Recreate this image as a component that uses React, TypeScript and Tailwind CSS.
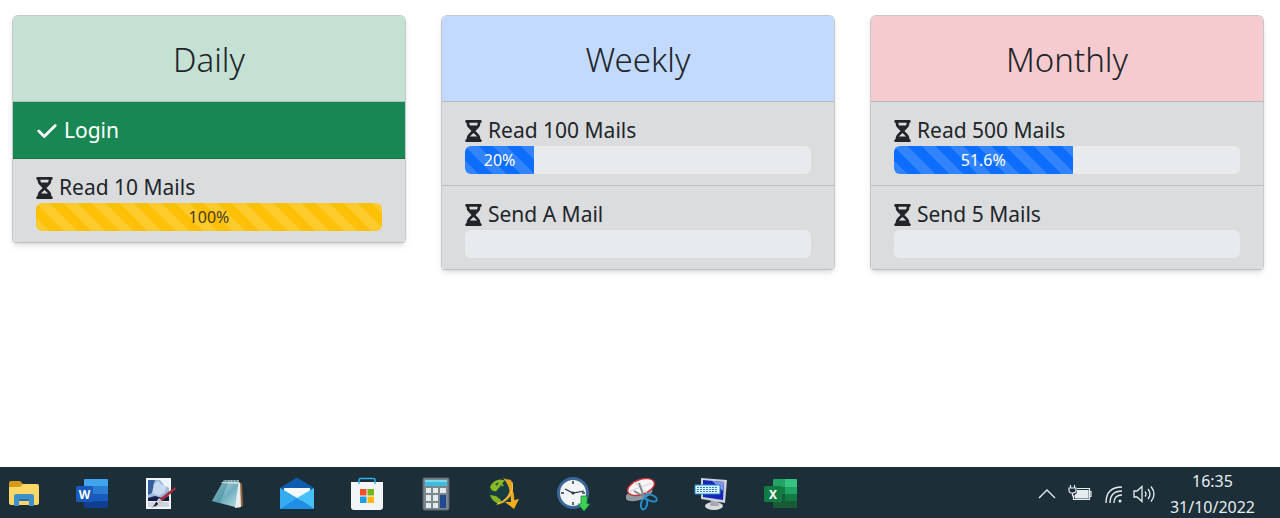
import type { ReactNode } from "react";
import clsx from "clsx";
import { FaCheck, FaHourglassHalf } from "react-icons/fa6";

interface Quest {
  title: string;
  progress: number;
  done?: boolean;
}

interface QuestGroup {
  name: string;
  headerClass: string;
  quests: Quest[];
}

const GROUPS: QuestGroup[] = [
  {
    name: "Daily",
    headerClass: "bg-[#c5e1d4]",
    quests: [
      { title: "Login", progress: 100, done: true },
      { title: "Read 10 Mails", progress: 100 },
    ],
  },
  {
    name: "Weekly",
    headerClass: "bg-[#c2daff]",
    quests: [
      { title: "Read 100 Mails", progress: 20 },
      { title: "Send A Mail", progress: 0 },
    ],
  },
  {
    name: "Monthly",
    headerClass: "bg-[#f5cbcf]",
    quests: [
      { title: "Read 500 Mails", progress: 51.6 },
      { title: "Send 5 Mails", progress: 0 },
    ],
  },
];

const STRIPES =
  "bg-[linear-gradient(45deg,rgba(255,255,255,.15)_25%,transparent_25%,transparent_50%,rgba(255,255,255,.15)_50%,rgba(255,255,255,.15)_75%,transparent_75%,transparent)] bg-[length:28px_28px]";

function ProgressBar({ label, value }: { label: string; value: number }) {
  return (
    <div
      role="progressbar"
      aria-label={label}
      aria-valuenow={value}
      aria-valuemin={0}
      aria-valuemax={100}
      className="h-7 overflow-hidden rounded-md bg-[#e7ebee]"
    >
      {value > 0 && (
        <div
          className={clsx(
            "flex h-full items-center justify-center text-base",
            STRIPES,
            value >= 100 ? "bg-[#ffc107] text-[#4a3c12]" : "bg-[#0d6efd] text-white"
          )}
          style={{ width: `${value}%` }}
        >
          {value}%
        </div>
      )}
    </div>
  );
}

function QuestRow({ quest }: { quest: Quest }) {
  return (
    <li
      className={clsx(
        "border-b px-[23px] pt-3.5",
        quest.done
          ? "border-[#177548] bg-[#198754] pb-3 text-white"
          : "border-[#bcbec0] bg-[#dadcde] pb-[11px] text-[#212529]"
      )}
    >
      <div className="flex h-[30px] items-center gap-1.5 text-[21px]">
        {quest.done ? <FaCheck className="h-[22px] w-[22px]" /> : <FaHourglassHalf className="h-[22px] w-[17px]" />}
        <span>{quest.title}</span>
      </div>
      {!quest.done && <ProgressBar label={quest.title} value={quest.progress} />}
    </li>
  );
}

function QuestCard({ group }: { group: QuestGroup }) {
  return (
    <section className="overflow-hidden rounded-t-md rounded-b-sm border border-b-0 border-[#c6c9cb] shadow-md">
      <h2
        className={clsx(
          "flex h-[86px] items-center justify-center border-b border-[#b4b9bd] pt-0.5 text-[33px] font-light text-[#212529]",
          group.headerClass
        )}
      >
        {group.name}
      </h2>
      <ul>
        {group.quests.map((q) => (
          <QuestRow key={q.title} quest={q} />
        ))}
      </ul>
    </section>
  );
}

function ExplorerIcon() {
  return (
    <svg viewBox="0 0 32 32" className="size-8">
      <path d="M1 5q0-2 2-2h9l3 3h12q2 0 2 2v4H1z" fill="#d69a18" />
      <path d="M1 9h11l3-3h14q2 0 2 2v17q0 2-2 2H3q-2 0-2-2z" fill="#fbd768" />
      <path d="M6 28V18q0-2 2-2h16q2 0 2 2v10h-5v-5H11v5z" fill="#3f8fcb" />
      <path d="M11 21h10v2H11z" fill="#2873ae" />
    </svg>
  );
}

function WordIcon() {
  return (
    <svg viewBox="0 0 32 32" className="size-8">
      <path d="M8 2q0-1 1-1h22q1 0 1 1v6H8z" fill="#41a5ee" />
      <path d="M8 8h24v8H8z" fill="#2b7cd3" />
      <path d="M8 16h24v7H8z" fill="#185abd" />
      <path d="M8 23h24v6q0 1-1 1H9q-1 0-1-1z" fill="#103f91" />
      <rect x="0" y="8" width="17" height="16" rx="1.5" fill="#185abd" />
      <text x="8.500" y="20.500" textAnchor="middle" fontSize="12" fontWeight="700" fill="#fff">
        W
      </text>
    </svg>
  );
}

function PaintIcon() {
  return (
    <svg viewBox="0 0 32 32" className="size-8">
      <path d="M2 0h25v31H2z" fill="#f3f5f9" />
      <path d="M4 2h21v21H4z" fill="#9db8dd" />
      <path d="M4 2h7l-2 6 3-1-2 7-6 3z" fill="#345f9f" />
      <path d="M10 6l4-3 4 4 5-1-2 8-6 4-7-3z" fill="#c7d9ee" />
      <path d="M16 2h9v8l-5-3z" fill="#e9f1fa" />
      <path d="M4 20l7-2 7 2 7-2v5H4z" fill="#141d49" />
      <path d="M4 24h21v5H4z" fill="#cfd4df" />
      <path d="M31 9l1 2-15 13-3-2z" fill="#a1303a" />
      <path d="M15 20l4 4-4 3-3-3z" fill="#c9cbd0" />
      <path d="M12 23l3 3q-3 4-8 3 3-1 5-6z" fill="#222633" stroke="#dce0e6" />
    </svg>
  );
}

function NotepadIcon() {
  return (
    <svg viewBox="0 0 32 32" className="size-8">
      <defs>
        <linearGradient id="pad" x1="0" y1="0" x2="1" y2="1">
          <stop offset="0" stopColor="#d8f0f3" />
          <stop offset="0.550" stopColor="#6fafbd" />
          <stop offset="1" stopColor="#bfdce2" />
        </linearGradient>
      </defs>
      <path d="M26 3l4 3 1 22-5 2z" fill="#94683e" />
      <path d="M24 3l4 2 1 24-6 1z" fill="#e9eef0" />
      <path d="M12 2h15l-4 27-23-6z" fill="url(#pad)" />
      <path d="M12 2L0 23l8 2L17 3z" fill="#3c8394" opacity="0.500" />
      <path d="M10 4h17l-1 2-17-1z" fill="#cdd6d9" />
      <path d="M12 2v2M15 2v2M18 2v2M21 2v2M24 2v2" stroke="#626d72" />
    </svg>
  );
}

function MailIcon() {
  return (
    <svg viewBox="0 0 34 32" className="h-8 w-[34px]">
      <path d="M0 10L16 0q1-.6 2 0l16 10v4L17 24 0 14z" fill="#0f5cae" />
      <path d="M4 10h26v8L17 26 4 16z" fill="#f4f8fb" />
      <path d="M34 10L17 20l17 11z" fill="#45c1f8" />
      <path d="M0 10l34 21H0z" fill="#2b9df0" />
      <path d="M0 31l17-11 17 11z" fill="#1f8ee6" />
      <path d="M0 10l17 10L0 31z" fill="#35abf0" />
    </svg>
  );
}

function StoreIcon() {
  return (
    <svg viewBox="0 0 34 34" className="size-[34px]">
      <path d="M1 5h32v25q0 3-3 3H4q-3 0-3-3z" fill="#f3f4f5" />
      <path d="M9 7V3q0-1.500 1.500-1.500h13Q25 1.500 25 3v4" fill="none" stroke="#2eb2ea" strokeWidth="1.500" />
      <path d="M10 12h6.500v6.500H10z" fill="#ee5028" />
      <path d="M17.500 12H24v6.500h-6.500z" fill="#74b51b" />
      <path d="M10 19.500h6.500V26H10z" fill="#1a9fe6" />
      <path d="M17.500 19.500H24V26h-6.500z" fill="#fbb70e" />
    </svg>
  );
}

function CalculatorIcon() {
  return (
    <svg viewBox="0 0 32 34" className="h-[34px] w-8">
      <rect x="3" y="1" width="26" height="32" rx="1.500" fill="#7b868e" stroke="#59636b" />
      <path d="M5 3h22v6H5z" fill="#43b9dc" />
      <path d="M5 3h22v2H5z" fill="#7bd7ed" />
      <path
        d="M6 11h5v5H6zM13 11h5v5h-5zM20 11h6v5h-6zM6 18h5v6H6zM13 18h5v6h-5zM6 26h5v5H6zM13 26h5v5h-5z"
        fill="#e5eaed"
      />
      <path d="M20 18h6v13h-6z" fill="#204b91" />
    </svg>
  );
}

function GlobeIcon() {
  return (
    <svg viewBox="0 0 32 34" className="h-[34px] w-8">
      <circle cx="13" cy="15" r="12.500" fill="#173d40" />
      <path d="M2 10Q5 3 12 2.500l5 1-3 3 2 2-5 2-3 4-4-1z" fill="#8cba24" />
      <path d="M2 18l6 1 5 4-1 4Q4 25 2 18z" fill="#86b524" />
      <path d="M7 7l4-2-2 4zM11 9l3-1-1 2z" fill="#245042" />
      <path d="M15 1q6 1 8 8 4 9 3 14l5-1-5 10-9-7 6 0Q23 9 15 1z" fill="#f2ac1c" />
      <path d="M23 3q5 10-2 18-5 6-14 7Q16 25 20 18q4-8-1-16z" fill="#e3a21b" />
      <path d="M24 5q2 9-4 15-5 5-11 7" fill="none" stroke="#f7cf58" />
    </svg>
  );
}

function ClockIcon() {
  return (
    <svg viewBox="0 0 34 34" className="size-[34px]">
      <circle cx="17" cy="16" r="14.500" fill="#f2f5f6" stroke="#39679a" strokeWidth="3" />
      <path d="M17 4v3M17 25v3M5 16h3M26 16h3" stroke="#273744" strokeWidth="1.500" />
      <path d="M9 12l8 4 11-2" fill="none" stroke="#273744" strokeWidth="1.200" />
      <circle cx="17" cy="16" r="1.500" fill="#273744" />
      <path d="M25 19h6v8h3l-6 7-6-7h3z" fill="#3ed254" stroke="#1b8d37" strokeWidth="0.800" />
    </svg>
  );
}

function SnippingIcon() {
  return (
    <svg viewBox="0 0 32 34" className="h-[34px] w-8">
      <ellipse cx="13" cy="17" rx="14" ry="6" transform="rotate(-18 13 17)" fill="#9299a0" />
      <ellipse cx="15" cy="10" rx="14" ry="7.500" transform="rotate(-20 15 10)" fill="#f6f4f4" stroke="#ca303b" strokeWidth="1.500" />
      <path d="M4 14l22-8M8 5l13 11" stroke="#d2d4d7" />
      <path d="M13 6l5 14M8 14l9 5" stroke="#818991" strokeWidth="2" />
      <ellipse cx="18" cy="27" rx="3" ry="5.500" transform="rotate(10 18 27)" fill="none" stroke="#238dcc" strokeWidth="2" />
      <ellipse cx="25" cy="21" rx="6" ry="3" transform="rotate(20 25 21)" fill="none" stroke="#238dcc" strokeWidth="2" />
    </svg>
  );
}

function KeyboardIcon() {
  return (
    <svg viewBox="0 0 34 34" className="size-[34px]">
      <ellipse cx="20" cy="29" rx="9" ry="4" fill="#d8dade" />
      <path d="M17 23h7l1 6h-9z" fill="#a7aab1" />
      <path d="M7 1l26 2-2 23L7 22z" fill="#cbd2dd" />
      <path d="M9 3l21 2-1 18-20-3z" fill="#1726b4" />
      <path d="M18 4l12 1-1 9z" fill="#8395e4" />
      <path d="M1 8h25v9H1z" fill="#e0f2fb" stroke="#258fca" />
      <path d="M3 10.500h21M3 12.500h21M3 14.500h21" stroke="#2786bd" strokeDasharray="2 1" />
    </svg>
  );
}

function ExcelIcon() {
  return (
    <svg viewBox="0 0 34 32" className="h-8 w-[34px]">
      <path d="M9 2q0-1 1-1h11v8H9z" fill="#21a366" />
      <path d="M21 1h11q1 0 1 1v7H21z" fill="#33c481" />
      <path d="M9 9h12v7H9z" fill="#107c41" />
      <path d="M21 9h12v7H21z" fill="#21a366" />
      <path d="M9 16h12v7H9z" fill="#185c37" />
      <path d="M21 16h12v7H21z" fill="#107c41" />
      <path d="M9 23h24v6q0 1-1 1H10q-1 0-1-1z" fill="#185c37" />
      <rect x="0" y="8" width="18" height="16" rx="1.500" fill="#107c41" />
      <text x="9" y="20.500" textAnchor="middle" fontSize="12" fontWeight="700" fill="#fff">
        X
      </text>
    </svg>
  );
}

const APPS: { name: string; icon: ReactNode }[] = [
  { name: "File Explorer", icon: <ExplorerIcon /> },
  { name: "Word", icon: <WordIcon /> },
  { name: "Paint", icon: <PaintIcon /> },
  { name: "Notepad", icon: <NotepadIcon /> },
  { name: "Mail", icon: <MailIcon /> },
  { name: "Store", icon: <StoreIcon /> },
  { name: "Calculator", icon: <CalculatorIcon /> },
  { name: "Download manager", icon: <GlobeIcon /> },
  { name: "Scheduler", icon: <ClockIcon /> },
  { name: "Snipping Tool", icon: <SnippingIcon /> },
  { name: "On-Screen Keyboard", icon: <KeyboardIcon /> },
  { name: "Excel", icon: <ExcelIcon /> },
];

function Tray() {
  return (
    <div className="flex items-center text-[#e6edf0]">
      <button type="button" aria-label="Show hidden icons">
        <svg viewBox="0 0 18 24" className="h-6 w-[18px]" fill="none" stroke="currentColor" strokeWidth="1.300">
          <path d="M1 16l8-8 8 8" />
        </svg>
      </button>
      <button type="button" aria-label="Battery" className="ml-3">
        <svg viewBox="0 0 24 24" className="size-6" fill="none" stroke="currentColor" strokeWidth="1.200">
          <path d="M9 6.500h12.500v11H5.500V14M21.500 9.500h1.500v5h-1.500" />
          <path d="M9.500 8.500h10.500v7.500H7.500v-3q2-1 2-3z" fill="currentColor" />
          <path d="M2.500 3v3M6.500 3v3M1 6h7v2.500q0 2.500-3.500 2.500T1 8.500zM4.500 11v3h3" />
        </svg>
      </button>
      <button type="button" aria-label="Network" className="ml-3">
        <svg viewBox="0 0 20 24" className="h-6 w-5" fill="none" stroke="currentColor" strokeWidth="1.300">
          <path d="M2 21Q2 5 18 5M6 21Q6 9 18 9M10 21q0-8 8-8" />
          <circle cx="16" cy="19" r="1.500" fill="currentColor" stroke="none" />
        </svg>
      </button>
      <button type="button" aria-label="Volume" className="ml-2">
        <svg viewBox="0 0 24 24" className="size-6" fill="none" stroke="currentColor" strokeWidth="1.300">
          <path d="M2 9h3l5-4.500v15L5 15H2z" />
          <path d="M13 9.500q2 2.500 0 5M16 7q4 5 0 10M19 4.500q6 7.500 0 15" />
        </svg>
      </button>
      <div className="ml-3.5 mr-[25px] text-center text-base leading-[26px]">
        <div>16:35</div>
        <div>31/10/2022</div>
      </div>
    </div>
  );
}

export default function App() {
  return (
    <div className="flex min-h-screen flex-col bg-white font-['Noto_Sans','Open_Sans',sans-serif]">
      <main className="grid flex-1 grid-cols-3 items-start gap-[35px] pt-[15px] pr-4 pl-3">
        {GROUPS.map((group) => (
          <QuestCard key={group.name} group={group} />
        ))}
      </main>
      <footer className="flex h-[51px] items-center justify-between bg-[#1c2e38] pt-[3px]">
        <nav aria-label="Taskbar" className="ml-2 flex w-[790px] items-center justify-between">
          {APPS.map((app) => (
            <button key={app.name} type="button" aria-label={app.name}>
              {app.icon}
            </button>
          ))}
        </nav>
        <Tray />
      </footer>
    </div>
  );
}
